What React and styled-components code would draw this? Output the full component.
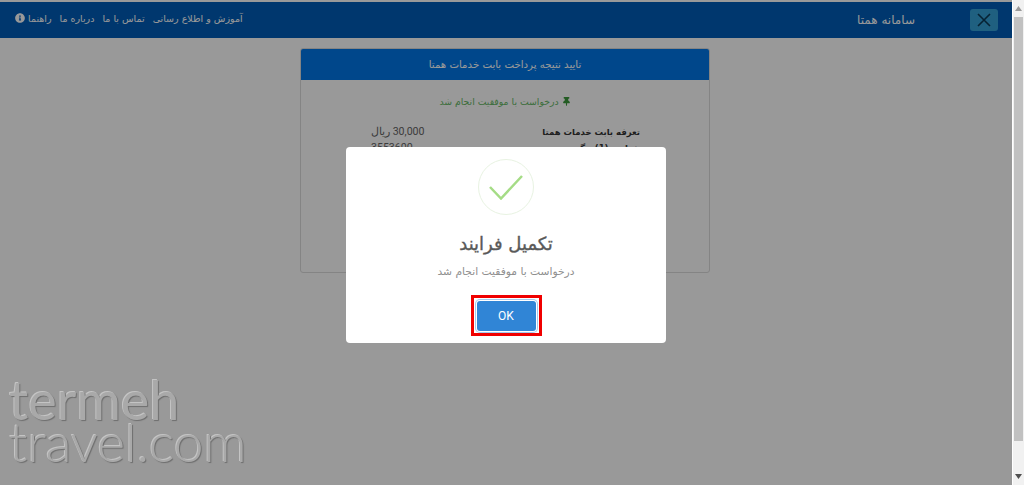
import React from "react";
import styled, { createGlobalStyle } from "styled-components";
import { FaInfoCircle, FaThumbtack } from "react-icons/fa";

const arabicFont = '"DejaVu Sans", "Noto Sans", sans-serif';

const GlobalStyle = createGlobalStyle`
    html, body {
        margin: 0;
        padding: 0;
        height: 100%;
        overflow: hidden;
        background: #fff;
    }
    #root {
        height: 100%;
    }
`;

const Window = styled.div`
    display: flex;
    height: 485px;
    width: 1024px;
    font-family: ${arabicFont};
`;

const Page = styled.div`
    position: relative;
    flex: 1;
    background: #fff;
    padding-top: 2px;
    direction: rtl;
    overflow: hidden;
`;

const Navbar = styled.div`
    display: flex;
    align-items: center;
    height: 36px;
    padding: 0 14px 0 15px;
    background: #005cb8;
    color: #fff;
`;

const Toggle = styled.div`
    display: flex;
    align-items: center;
    justify-content: center;
    width: 28px;
    height: 22px;
    border-radius: 3px;
    background: #34a0d6;
`;

const Brand = styled.div`
    margin-right: 55px;
    font-size: 12px;
`;

const NavLinks = styled.div`
    display: flex;
    align-items: center;
    gap: 8px;
    margin-right: auto;
    margin-top: -4px;
    font-size: 9.5px;
`;

const NavLink = styled.span`
    display: inline-flex;
    align-items: center;
    gap: 3px;
`;

const Card = styled.div`
    width: 410px;
    height: 225px;
    margin: 10px 302px 0 0;
    box-sizing: border-box;
    border: 1px solid #ddd;
    border-radius: 3px;
    background: #fff;
    overflow: hidden;
`;

const CardHeader = styled.div`
    display: flex;
    align-items: center;
    justify-content: center;
    height: 31px;
    background: #0077e8;
    color: #fff;
    font-size: 10.2px;
`;

const SuccessLine = styled.div`
    display: flex;
    align-items: center;
    justify-content: center;
    gap: 3px;
    margin-top: 16px;
    color: #66b866;
    font-size: 9.3px;
`;

const InfoRows = styled.div`
    display: flex;
    flex-direction: column;
    margin-top: 17px;
    padding: 0 69px 0 70px;
`;

const InfoRow = styled.div`
    display: flex;
    justify-content: space-between;
    height: 16px;
    line-height: 16px;
    font-size: 8.5px;
    color: #333;
`;

const InfoLabel = styled.span`
    font-weight: bold;
`;

const InfoValue = styled.span`
    font-family: "Roboto", sans-serif;
    font-size: 10.6px;
    color: #666;
`;

const Watermark = styled.div`
    position: absolute;
    left: 9px;
    bottom: 22px;
    direction: ltr;
    font-family: "Lato", sans-serif;
    font-size: 54px;
    line-height: 42px;
    color: #a9a9a9;
    text-shadow: 1px 1px 1px #6e6e6e, -1px -1px 0 #c4c4c4;
    z-index: 2;
`;

const WatermarkLine = styled.div`
    font-weight: ${props => props.$heavy ? 400 : 300};
    letter-spacing: ${props => props.$spacing};
`;

const Backdrop = styled.div`
    position: absolute;
    inset: 0;
    display: flex;
    justify-content: center;
    background: rgba(0, 0, 0, 0.4);
`;

const Modal = styled.div`
    display: flex;
    flex-direction: column;
    align-items: center;
    width: 320px;
    height: 196px;
    margin-top: 147px;
    box-sizing: border-box;
    padding-top: 12px;
    border-radius: 4px;
    background: #fff;
`;

const CheckCircle = styled.div`
    display: flex;
    align-items: center;
    justify-content: center;
    width: 54px;
    height: 54px;
    border: 1.5px solid #e8f3e2;
    border-radius: 50%;
`;

const ModalTitle = styled.div`
    margin-top: 16px;
    font-size: 18px;
    line-height: 26px;
    color: #595959;
    -webkit-text-stroke: 0.35px #595959;
`;

const ModalText = styled.div`
    margin-top: 8px;
    font-size: 10.7px;
    line-height: 14px;
    color: #8f8f8f;
`;

const Highlight = styled.div`
    display: flex;
    align-items: center;
    justify-content: center;
    width: 71px;
    height: 41px;
    margin-top: 16px;
    box-sizing: border-box;
    border: 3px solid #f00000;
`;

const OkButton = styled.button`
    width: 59px;
    height: 30px;
    padding: 0;
    border: 0;
    border-radius: 3px;
    background: #3085d6;
    box-shadow: 0 0 0 1px #fff, 0 0 0 2px rgba(80, 150, 220, 0.5);
    color: #fff;
    font-family: "Roboto", sans-serif;
    font-size: 12px;
`;

const Scrollbar = styled.div`
    display: flex;
    flex-direction: column;
    align-items: stretch;
    width: 12px;
    background: #f1f1f1;
    border-left: 1px solid #fff;
    box-sizing: border-box;
`;

const ScrollArrow = styled.div`
    display: flex;
    align-items: center;
    justify-content: center;
    height: 17px;
`;

const ScrollThumb = styled.div`
    height: 424px;
    margin: 0 1px;
    background: #c1c1c1;
`;

const ScrollSpacer = styled.div`
    flex: 1;
`;

const Arrow = ({ d, color }) => (
    <svg width="7" height="5" viewBox="0 0 7 5"><path d={d} fill={color} /></svg>
);

export default function App() {
    return <>
        <GlobalStyle />
        <Window>
            <Page>
                <Navbar>
                    <Toggle>
                        <svg width="16" height="16" viewBox="0 0 16 16">
                            <path d="M2 2L14 14M14 2L2 14" stroke="#0b3a55" strokeWidth="1.6" fill="none" />
                        </svg>
                    </Toggle>
                    <Brand>سامانه همتا</Brand>
                    <NavLinks>
                        <NavLink>آموزش و اطلاع رسانی</NavLink>
                        <NavLink>تماس با ما</NavLink>
                        <NavLink>درباره ما</NavLink>
                        <NavLink>راهنما <FaInfoCircle size={10} /></NavLink>
                    </NavLinks>
                </Navbar>
                <Card>
                    <CardHeader>تایید نتیجه پرداخت بابت خدمات همتا</CardHeader>
                    <SuccessLine><FaThumbtack size={9} color="#3c9a3c" /> درخواست با موفقیت انجام شد</SuccessLine>
                    <InfoRows>
                        <InfoRow>
                            <InfoLabel>تعرفه بابت خدمات همتا</InfoLabel>
                            <InfoValue>30,000 ریال</InfoValue>
                        </InfoRow>
                        <InfoRow>
                            <InfoLabel>شناسه (1) پیگیری</InfoLabel>
                            <InfoValue>3553600</InfoValue>
                        </InfoRow>
                    </InfoRows>
                </Card>
                <Backdrop>
                    <Modal>
                        <CheckCircle>
                            <svg width="34" height="25" viewBox="0 0 34 25">
                                <path d="M1 12L12 23.5L33 1" stroke="#a5dc86" strokeWidth="2.5" fill="none" />
                            </svg>
                        </CheckCircle>
                        <ModalTitle>تکمیل فرایند</ModalTitle>
                        <ModalText>درخواست با موفقیت انجام شد</ModalText>
                        <Highlight>
                            <OkButton>OK</OkButton>
                        </Highlight>
                    </Modal>
                </Backdrop>
                <Watermark>
                    <WatermarkLine $heavy $spacing="0px">termeh</WatermarkLine>
                    <WatermarkLine $spacing="-0.3px">travel.com</WatermarkLine>
                </Watermark>
            </Page>
            <Scrollbar>
                <ScrollArrow><Arrow d="M3.5 0L7 5H0Z" color="#9a9a9a" /></ScrollArrow>
                <ScrollThumb />
                <ScrollSpacer />
                <ScrollArrow><Arrow d="M0 0H7L3.5 5Z" color="#505050" /></ScrollArrow>
            </Scrollbar>
        </Window>
    </>;
}
